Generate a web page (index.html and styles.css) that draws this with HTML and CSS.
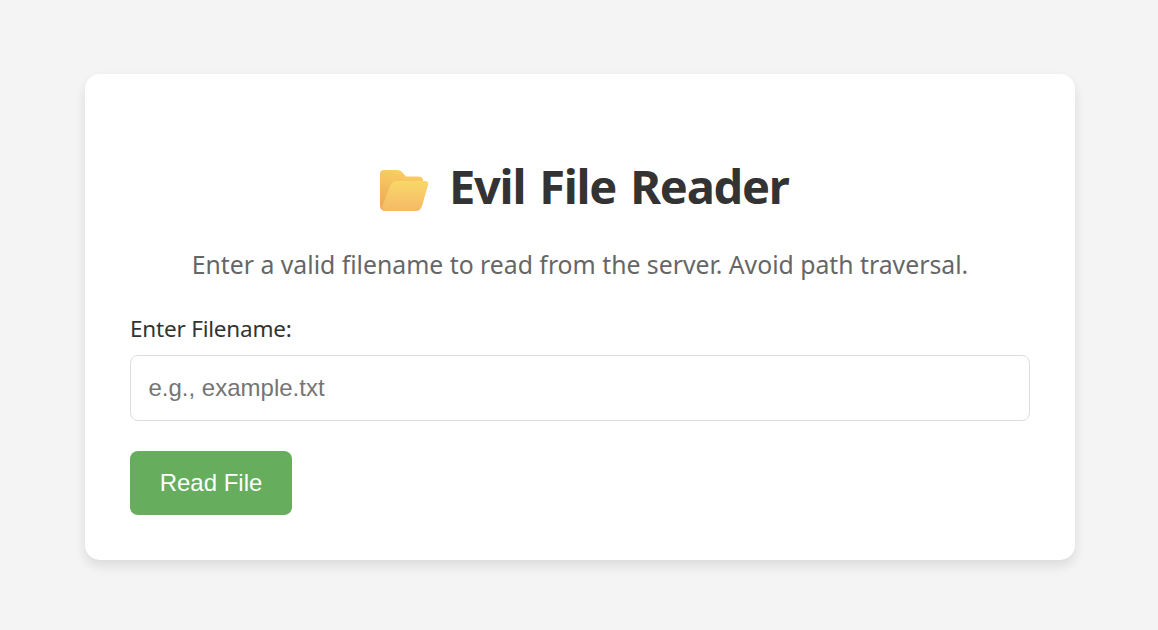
FILE: index.html
```html
<!DOCTYPE html>
<html lang="en">
<head>
<meta charset="utf-8">
<title>Evil File Reader</title>
<link rel="stylesheet" href="styles.css">
</head>
<body>
<main class="card">
  <h1 class="title">
    <svg class="folder" viewBox="0 0 50 44" aria-hidden="true">
      <defs>
        <linearGradient id="back" x1="0.3" y1="0" x2="0.1" y2="1"><stop offset="0" stop-color="#f9cd64"/><stop offset="1" stop-color="#eba556"/></linearGradient>
        <linearGradient id="front" x1="0" y1="0" x2="0" y2="1"><stop offset="0" stop-color="#f9d866"/><stop offset="1" stop-color="#f5b969"/></linearGradient>
      </defs>
      <path fill="url(#back)" d="M1 5Q1 1 5 1H18Q21 1 23 3L27 7.500H39Q44 7.500 44 11V18L10 42H7Q1 42 1 36Z"/>
      <path fill="url(#front)" d="M11 17Q13 12 18 12H46Q50 12 49 16L43 37Q41.500 42 37 42H7Q2 42 3.500 37Z"/>
    </svg>
    <span class="title-text">Evil File Reader</span>
  </h1>
  <p class="intro">Enter a valid filename to read from the server. Avoid path traversal.</p>
  <form class="form">
    <label class="label" for="filename">Enter Filename:</label>
    <input class="input" id="filename" type="text" placeholder="e.g., example.txt">
    <button class="button" type="button">Read File</button>
  </form>
</main>
</body>
</html>
```
FILE: styles.css
```css
* { box-sizing: border-box; }
body { margin: 0; padding: 74px 83px 70px 85px; background: #f4f4f4; color: #333; font-family: "Noto Sans", sans-serif; }
.card { height: 486px; padding: 79px 45px 45px; background: #fff; border-radius: 15px; box-shadow: 0 6px 12px rgba(0,0,0,.1); }
.title { display: flex; align-items: center; gap: 20px; height: 66px; margin: 0 0 18px 249px; font-size: 47px; line-height: 66px; letter-spacing: -1.27px; word-spacing: 3.2px; white-space: nowrap; }
.folder { width: 50px; height: 44px; flex: none; margin-top: 9px; }
.intro { margin: 0; height: 57px; line-height: 56px; text-align: center; font-size: 24.77px; color: #666; white-space: nowrap; }
.form { display: flex; flex-direction: column; align-items: flex-start; }
.label { height: 61px; line-height: 70px; font-size: 22.5px; letter-spacing: -.2px; }
.input { width: 100%; height: 66px; padding: 0 17.5px; border: 1px solid #ddd; border-radius: 8px; font: 24px "Liberation Sans", Arial, sans-serif; }
.input::placeholder { color: #757575; }
.button { width: 162px; height: 64px; margin-top: 30px; padding: 0; border: 0; border-radius: 8px; background: #66ad5d; color: #fff; font: 24px "Liberation Sans", Arial, sans-serif; }
```
